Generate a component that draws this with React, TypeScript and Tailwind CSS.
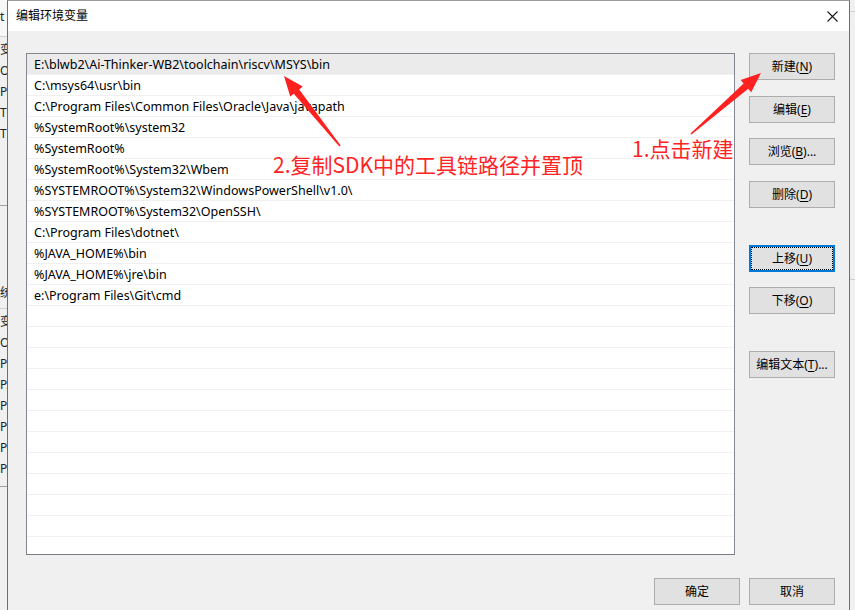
import React from "react";

const paths = [
  "E:\\blwb2\\Ai-Thinker-WB2\\toolchain\\riscv\\MSYS\\bin",
  "C:\\msys64\\usr\\bin",
  "C:\\Program Files\\Common Files\\Oracle\\Java\\javapath",
  "%SystemRoot%\\system32",
  "%SystemRoot%",
  "%SystemRoot%\\System32\\Wbem",
  "%SYSTEMROOT%\\System32\\WindowsPowerShell\\v1.0\\",
  "%SYSTEMROOT%\\System32\\OpenSSH\\",
  "C:\\Program Files\\dotnet\\",
  "%JAVA_HOME%\\bin",
  "%JAVA_HOME%\\jre\\bin",
  "e:\\Program Files\\Git\\cmd",
];

const font = "font-['Segoe_UI','Noto_Sans','Noto_Sans_CJK_SC',sans-serif]";

// tapered red arrow, tail -> tip
function arrowPoints(x1: number, y1: number, x2: number, y2: number) {
  const L = Math.hypot(x2 - x1, y2 - y1);
  const ux = (x2 - x1) / L;
  const uy = (y2 - y1) / L;
  const nx = -uy;
  const ny = ux;
  const head = 20;
  const bx = x2 - ux * head;
  const by = y2 - uy * head;
  const pt = (x: number, y: number, w: number) => `${x + nx * w},${y + ny * w}`;
  return [
    pt(x1, y1, 0.8),
    pt(bx, by, 3.5),
    pt(bx, by, 8),
    `${x2},${y2}`,
    pt(bx, by, -8),
    pt(bx, by, -3.5),
    pt(x1, y1, -0.8),
  ].join(" ");
}

function Btn({ label, mn, tail = "", focused = false, className = "" }: { label: string; mn?: string; tail?: string; focused?: boolean; className?: string }) {
  return (
    <button
      className={`w-[86px] h-[27px] shrink-0 bg-[#e1e1e1] text-[12px] text-black flex items-center justify-center ${
        focused ? "border-2 border-[#0078d7] p-[1px]" : "border border-[#adadad]"
      } ${className}`}
    >
      <span className={`flex items-center justify-center w-full h-full ${focused ? "outline outline-1 outline-dotted outline-black" : ""}`}>
        {label}
        {mn && (
          <>
            (<span className="underline underline-offset-2">{mn}</span>)
          </>
        )}
        {tail}
      </span>
    </button>
  );
}

const leftTop = ["变", "O", "Pa", "TE", "TN"];
const leftBottom = ["变", "O", "Pa", "PA", "PF", "PF", "PF", "PF"];

export default function App() {
  return (
    <div className={`relative w-[855px] h-[610px] flex bg-[#f0f0f0] overflow-hidden ${font}`}>
      {/* background window, left */}
      <div className="w-[7px] shrink-0 flex flex-col overflow-hidden text-[12px] leading-[21px] text-[#222] bg-[#f0f0f0]">
        <div className="h-[37px] shrink-0 bg-[#f7f7f7] border-b border-[#d0d0d0] pt-[6px]">t</div>
        <div className="h-[169px] shrink-0 pt-[2px] border-b border-[#a0a0a0]">
          {leftTop.map((t, i) => (
            <div key={i} className="h-[21px] whitespace-nowrap">{t}</div>
          ))}
        </div>
        <div className="h-[103px] shrink-0 pt-[76px] border-b border-[#d0d0d0]">统</div>
        <div className="h-[178px] shrink-0 pt-[2px] border-b border-[#a0a0a0]">
          {leftBottom.map((t, i) => (
            <div key={i} className="h-[21px] whitespace-nowrap">{t}</div>
          ))}
        </div>
      </div>

      {/* dialog */}
      <div className="w-[843px] shrink-0 flex flex-col border-x border-[#6f6f6f] border-t border-t-[#9a9a9a] bg-[#f0f0f0]">
        <div className="h-[30px] shrink-0 bg-white flex items-center justify-between pl-[8px] pr-[10px]">
          <span className="text-[12px] text-black">编辑环境变量</span>
          <svg width="11" height="11" viewBox="0 0 11 11" className="mr-[1px]">
            <path d="M0.5 0.5 L10.5 10.5 M10.5 0.5 L0.5 10.5" stroke="#1a1a1a" strokeWidth="1.1" />
          </svg>
        </div>

        <div className="flex-1 flex flex-col pl-[18px] pt-[22px]">
          <div className="flex">
            <div className="w-[709px] h-[502px] border border-[#828790] border-b-[#7a7a84] bg-white overflow-hidden">
              {Array.from({ length: 24 }).map((_, i) => (
                <div
                  key={i}
                  className={`h-[21px] border-b border-[#f0f0f0] pl-[7px] pt-[2px] flex items-center text-[12.5px] text-black whitespace-nowrap ${
                    i === 0 ? "bg-[#ebebeb]" : ""
                  }`}
                >
                  {paths[i] ?? ""}
                </div>
              ))}
            </div>

            <div className="ml-[14px] flex flex-col">
              <Btn label="新建" mn="N" />
              <Btn label="编辑" mn="E" className="mt-[16px]" />
              <Btn label="浏览" mn="B" tail="..." className="mt-[15px]" />
              <Btn label="删除" mn="D" className="mt-[16px]" />
              <Btn label="上移" mn="U" focused className="mt-[37px]" />
              <Btn label="下移" mn="O" className="mt-[15px]" />
              <Btn label="编辑文本" mn="T" tail="..." className="mt-[37px]" />
            </div>
          </div>

          <div className="w-[809px] mt-[23px] flex justify-end gap-[9px]">
            <Btn label="确定" />
            <Btn label="取消" />
          </div>
        </div>
      </div>

      {/* background window, right */}
      <div className="w-[5px] shrink-0 flex flex-col bg-[#f0f0f0]">
        <div className="h-[12px] border-b border-[#d0d0d0]" />
        <div className="h-[268px] border-b border-[#d0d0d0]" />
      </div>

      {/* red annotations */}
      <svg className="absolute inset-0 pointer-events-none" width="855" height="610">
        <polygon points={arrowPoints(340, 146, 284, 76)} fill="#ff2020" />
        <polygon points={arrowPoints(691, 134, 761, 73)} fill="#ff2020" />
      </svg>
      <span className="absolute left-[273px] top-[152px] text-[21px] leading-[24px] text-[#ff2424] font-['Noto_Sans_CJK_SC',sans-serif] whitespace-nowrap">
        2.复制SDK中的工具链路径并置顶
      </span>
      <span className="absolute left-[632px] top-[136px] text-[21px] leading-[24px] text-[#ff2424] font-['Noto_Sans_CJK_SC',sans-serif] whitespace-nowrap">
        1.点击新建
      </span>
    </div>
  );
}
